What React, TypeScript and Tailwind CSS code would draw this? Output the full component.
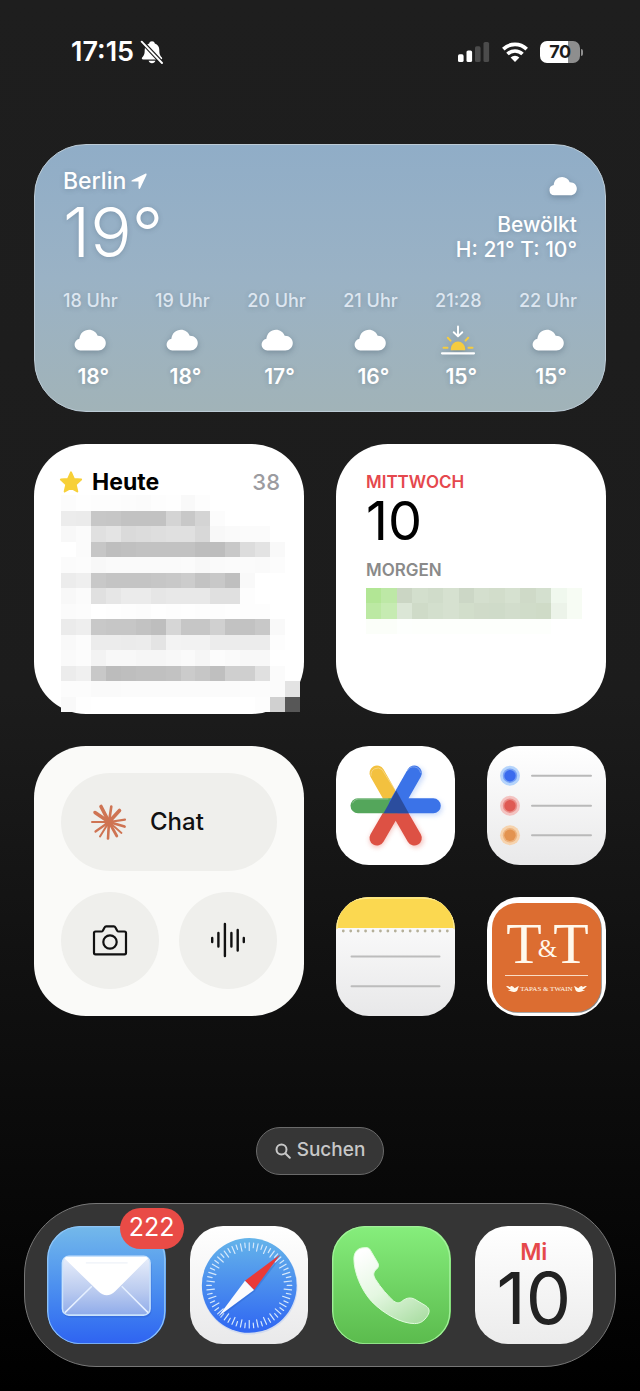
import type { ReactNode } from 'react';

const tile = 'relative block w-full aspect-square rounded-[33px] overflow-hidden';
const widget = 'rounded-[52px] aspect-square';

const hours = [
  { time: '18 Uhr', temp: '18°' },
  { time: '19 Uhr', temp: '18°' },
  { time: '20 Uhr', temp: '17°' },
  { time: '21 Uhr', temp: '16°' },
  { time: '21:28', temp: '15°', sunset: true },
  { time: '22 Uhr', temp: '15°' },
];

const taskRows = [
  'fc fe fd fd fc fb fd fe f9 fd -- -- -- -- -- --',
  'ec eb c7 c6 c2 c2 c2 d4 c8 d4 fc -- -- -- -- --',
  'f8 fb e0 e4 da dc de e0 e0 d8 f8 fa fb fb -- --',
  '-- fb c6 be c0 c2 c2 c2 c2 bd bd c8 dc e3 f9 --',
  'fb fc f8 fa fa fa fa fa fb f8 fa fb fb fa fc --',
  'ec ef c8 c4 c4 c4 c6 c8 cc c3 c8 bf f9 -- -- --',
  'f8 fb e0 e6 eb eb e6 e8 e8 e8 e0 e0 fd -- -- --',
  'fb fc -- fe fd fc fe fd fe fd fd fe fd fd -- --',
  'eb ee c8 c6 c6 c2 be d6 c6 c6 d0 c2 c2 c8 f9 --',
  'f9 fc ec ec eb ec e4 f3 f2 f2 ec ec ec ec fd --',
  'fa fc f3 f8 f8 f6 f6 f8 fa f6 fc fa f8 f8 -- --',
  'ec f0 c8 bc be c0 c0 c2 cb c6 bf cf cf e0 fb --',
  'fc fc fa fa fb fb fb fb fb fb fb fb fc fc fb e3',
  'f9 fe -- -- -- -- -- -- -- -- -- -- -- fd d0 57',
];

const eventRows = [
  '#b2e695 #bde8a6 #cbd6c4 #d3dfcd #d0dcca #d6e1d0 #ccd7c6 #d4dfce #d2ddcb #d6e1d0 #cfdac8 #d4e0cf #f0f8ee #f7fcf4',
  '#bce9a3 #c6ebb2 #dbe6d6 #cfdbc8 #d3dfcd #d6e1d0 #d2decb #d0dbc9 #cfdbc9 #d2ddcc #d0dcc9 #cfdbc7 #ecf3e9 #f7fcf4',
  '#fbfef9 #fbfef9 #fdfffd #fdfffc #fdfffc #fdfffc #fdfffc #fdfffc #fdfffc #fdfffc #fdfffc #fdfffc #fff #fff',
];

function Mosaic({ rows, cellWidth, cellHeight }: { rows: string[]; cellWidth: number; cellHeight: number }) {
  const cells = rows.map((row) => row.split(' '));
  return (
    <svg
      className="block w-full"
      viewBox={`0 0 ${cells[0].length * cellWidth} ${rows.length * cellHeight}`}
      shapeRendering="crispEdges"
      aria-hidden="true"
    >
      {cells.map((row, y) =>
        row.map((c, x) =>
          c === '--' ? null : (
            <rect
              key={`${x}-${y}`}
              x={x * cellWidth}
              y={y * cellHeight}
              width={cellWidth}
              height={cellHeight}
              fill={c.startsWith('#') ? c : `#${c}${c}${c}`}
            />
          )
        )
      )}
    </svg>
  );
}

function Cloud({ className }: { className: string }) {
  return (
    <svg viewBox="0 0 32 22" className={`${className} drop-shadow-[0_2px_3px_rgba(50,70,90,0.35)]`} fill="#fff" aria-hidden="true">
      <path d="M6.2 21.5A5.9 5.9 0 0 1 5.4 9.8C5.8 4.4 10 .7 15 .7c4 0 7.300 2.400 8.700 6 4.600-.2 8.100 3.100 8.100 7.300 0 4.300-3.300 7.500-7.500 7.500z" />
    </svg>
  );
}

function Sunset() {
  return (
    <svg viewBox="0 0 36 30" className="w-9 h-[30px] drop-shadow-[0_2px_3px_rgba(50,70,90,0.3)]" fill="none" strokeLinecap="round" aria-hidden="true">
      <path d="M18 1.500v9.500M13.700 7.200 18 11.400l4.300-4.200" stroke="#fff" strokeWidth="1.900" strokeLinejoin="round" />
      <path d="M10.800 25.300v-1.500a7.200 7.200 0 0 1 14.400 0v1.500z" fill="#f5cc3f" />
      <path d="M3.500 22.800h4M28.500 22.800h4M7.800 12.800l2.700 2.800M28.200 12.800l-2.700 2.800" stroke="#f5cc3f" strokeWidth="2" />
      <path d="M2 28.300h32" stroke="#fff" strokeWidth="2.200" />
    </svg>
  );
}

function StatusBar() {
  return (
    <header className="flex items-center justify-between pt-[38px] pl-[71px] pr-[57px] text-white">
      <div className="flex items-center gap-1.5">
        <span className="text-[27px] leading-7 font-semibold">17:15</span>
        <svg viewBox="0 0 24 24" className="w-6 h-6" aria-label="Stumm">
          <path d="M12 1.200c1.500 0 2.500.9 2.800 2.200 3 .9 4.500 3.300 4.500 6.600 0 4.300.7 5.600 2.400 7.300.9.9.5 2.100-.8 2.100H3.100c-1.300 0-1.700-1.200-.8-2.100C4 15.600 4.700 14.300 4.700 10c0-3.300 1.500-5.700 4.500-6.600.300-1.300 1.300-2.200 2.800-2.200zM8.600 20.700h6.800c-.4 1.500-1.700 2.500-3.400 2.500s-3-1-3.400-2.500z" fill="#fff" />
          <path d="M1.900 1.600 22.600 23.700" stroke="#1e1e1e" strokeWidth="4.200" />
          <path d="M1.700 1.700 22 23" stroke="#fff" strokeWidth="1.900" strokeLinecap="round" />
        </svg>
      </div>
      <div className="flex items-center">
        <svg viewBox="0 0 32 20" className="w-8 h-5 mr-3" aria-label="Mobilfunk">
          <rect x="0" y="12.300" width="5.600" height="7.700" rx="1.600" fill="#fff" />
          <rect x="8.500" y="8.500" width="5.600" height="11.500" rx="1.600" fill="#fff" />
          <rect x="17" y="4.300" width="5.600" height="15.700" rx="1.600" fill="#4b4b4b" />
          <rect x="25.500" y="0" width="5.600" height="20" rx="1.600" fill="#4b4b4b" />
        </svg>
        <svg viewBox="0 0 26 20" className="w-[26px] h-5 mr-3" aria-label="WLAN">
          <g fill="none" stroke="#fff" strokeWidth="3.600">
            <path d="M1.300 7.100a16.800 16.800 0 0 1 23.400 0" />
            <path d="M5.500 12a10.700 10.700 0 0 1 15 0" />
          </g>
          <path d="M13 19.900 8.600 15.500a6.300 6.300 0 0 1 8.800 0z" fill="#fff" />
        </svg>
        <div className="flex items-center gap-px">
          <div className="h-[22px] w-10 rounded-[7px] bg-linear-to-r from-white from-70% to-[#8e8e8e] to-70% flex items-center justify-center">
            <span className="text-[18px] leading-5 font-bold tracking-tight text-[#1c1c1c]">70</span>
          </div>
          <div className="w-0.5 h-[7px] rounded-r-full bg-[#8e8e8e]" />
        </div>
      </div>
    </header>
  );
}

function Weather() {
  return (
    <section className="rounded-[52px] px-7 pt-[22px] pb-5 bg-linear-to-b from-[#90adc7] via-[#9ab2c5] to-[#a1b3b8] border border-[#bccbd6] text-white text-shadow-[0_1px_5px_rgb(50_70_90/0.25)]">
      <div className="flex justify-between">
        <div>
          <h2 className="flex items-center gap-1 text-[23px] leading-7 font-medium">
            Berlin
            <svg viewBox="0 0 18 18" className="w-[18px] h-[18px]" fill="#fff" aria-hidden="true">
              <path d="M2 8.300 15.300 1.700c.9-.4 1.600.3 1.200 1.200L10.200 16.300c-.5 1-1.700.8-1.700-.4V9.600H2.400C1.200 9.600 1 8.800 2 8.300z" />
            </svg>
          </h2>
          <p className="text-[69px] leading-[74px] font-light">19°</p>
        </div>
        <div className="flex flex-col items-end pt-[9px] text-[21px] leading-[25px] font-medium">
          <Cloud className="w-7 h-5 mb-4" />
          <p>Bewölkt</p>
          <p>H: 21° T: 10°</p>
        </div>
      </div>
      <ul className="flex justify-between pt-5">
        {hours.map((h) => (
          <li key={h.time} className="flex flex-col items-center">
            <span className="text-[18px] leading-6 font-medium text-[#dde6f0]">{h.time}</span>
            <span className="flex h-[46px] items-center mt-1">{h.sunset ? <Sunset /> : <Cloud className="w-8 h-[22px]" />}</span>
            <span className="text-[21px] leading-7 font-semibold pl-1.5">{h.temp}</span>
          </li>
        ))}
      </ul>
    </section>
  );
}

function Tasks() {
  return (
    <section className={`${widget} bg-white pt-6 pl-[27px] pr-1 text-black`}>
      <div className="flex items-center pr-5 h-[27px]">
        <svg viewBox="0 0 24 24" className="w-6 h-6 -ml-0.5" fill="#f7d038" stroke="#f7d038" strokeWidth="2" strokeLinejoin="round" aria-hidden="true">
          <path d="m12 2.300 2.900 6.600 7.200.7-5.400 4.800 1.600 7.100L12 17.800l-6.300 3.700 1.600-7.100L1.900 9.600l7.200-.7z" />
        </svg>
        <h2 className="pl-[9px] grow text-[23px] leading-7 font-bold">Heute</h2>
        <span className="text-[22px] leading-7 font-medium text-[#9b9ba0]">38</span>
      </div>
      <Mosaic rows={taskRows} cellWidth={15} cellHeight={15.6} />
    </section>
  );
}

function DayWidget() {
  return (
    <section className={`${widget} bg-white pt-[26px] pl-[30px] pr-6 text-black`}>
      <h2 className="text-[17px] leading-6 font-semibold text-[#e5484d]">MITTWOCH</h2>
      <p className="text-[54px] leading-[54px]">10</p>
      <h3 className="mt-2.5 mb-1.5 text-[17px] leading-6 font-semibold text-[#8a8a8a]">MORGEN</h3>
      <Mosaic rows={eventRows} cellWidth={15} cellHeight={15} />
    </section>
  );
}

const rays = [
  [-8, -15.5, 3.6], [2.3, -15.5, 2.6], [10.5, -11.5, 3.6], [16, -2.3, 2.2], [15.5, 4.5, 2.8], [12.5, 11, 1.8],
  [7.8, 14, 2.8], [-1, 16.500, 2.6], [-9, 14.5, 2], [-13.5, 9.500, 2.2], [-17, 0, 2], [-14, -9.500, 3.4],
];

function ChatWidget() {
  const button = 'flex items-center justify-center rounded-full bg-[#efefec]';
  return (
    <section className={`${widget} bg-[#fafaf8] p-[27px] grid grid-cols-2 grid-rows-2 gap-x-5 gap-y-[21px] text-[#111]`}>
      <button className={`${button} col-span-2 justify-start! pl-[29px] gap-[22px]`}>
        <svg viewBox="-19 -19 38 38" className="w-[38px] h-[38px]" stroke="#cf7453" strokeLinecap="round" aria-hidden="true">
          <circle r="4.500" fill="#cf7453" stroke="none" />
          {rays.map(([x, y, w]) => (
            <path key={`${x},${y}`} d={`M0 0 ${x} ${y}`} strokeWidth={w} />
          ))}
        </svg>
        <span className="text-[24px] leading-7 font-medium">Chat</span>
      </button>
      <button className={button} aria-label="Kamera">
        <svg viewBox="0 0 36 32" className="w-9 h-8" fill="none" stroke="currentColor" strokeWidth="2.200" strokeLinejoin="round" aria-hidden="true">
          <path d="M3.500 7.500h5.800c.7 0 1.200-.3 1.500-.8l1.900-3.400c.3-.6.800-.9 1.500-.9h7.600c.7 0 1.200.3 1.500.9l1.900 3.400c.3.500.8.800 1.500.800h5.800c1 0 1.500.6 1.500 1.500v19.800c0 1-.5 1.500-1.500 1.500h-29c-1 0-1.500-.5-1.500-1.500V9c0-.9.5-1.500 1.500-1.500z" />
          <circle cx="18" cy="18" r="6.700" />
        </svg>
      </button>
      <button className={button} aria-label="Sprache">
        <svg viewBox="0 0 36 36" className="w-9 h-9" fill="none" stroke="currentColor" strokeWidth="2.400" strokeLinecap="round" aria-hidden="true">
          <path d="M2.200 16v4M8.400 11v13.500M14.900 2v32M21.400 11v13.500M27.700 8v20.500M33.800 16v4" />
        </svg>
      </button>
    </section>
  );
}

function GoogleOneIcon() {
  return (
    <svg viewBox="0 0 119 119" className={`${tile} bg-white`} strokeWidth="15" strokeLinecap="round" role="img" aria-label="Google One">
      <defs>
        <filter id="arm-glow" x="-20%" y="-20%" width="140%" height="140%">
          <feGaussianBlur stdDeviation="2.500" />
        </filter>
      </defs>
      <g filter="url(#arm-glow)" opacity="0.35">
        <path d="M80 94 61 63M41 94l18-30" stroke="#df4f43" />
        <path d="M99 62H62M81 29 61 60" stroke="#6f9df0" />
      </g>
      <path d="M41 27 59.700 59.700" stroke="#f3c13f" />
      <path d="M78.300 92 59.700 59.700M41 92l18.700-32.300" stroke="#dd5144" />
      <path d="M22 59.700h37" stroke="#54a65b" />
      <path d="M97.300 59.700H62M78.300 27 60.300 58.500" stroke="#3b73e8" />
      <path d="M60.200 44.500 72.800 67.200H47.500z" fill="#2b4d9e" />
      <g fill="none" stroke="#fff" strokeWidth="0.800" opacity="0.400">
        <path d="M35 29.500a6.800 6.800 0 0 1 11-6l13.500 21M16.500 57a6.800 6.800 0 0 1 5.500-4h30M71.500 24.500a7 7 0 0 1 13 2" />
      </g>
    </svg>
  );
}

function RemindersIcon() {
  const dots = [
    { y: 29.7, halo: '#b5d4fb', core: '#3a6bee' },
    { y: 59.7, halo: '#f3c3c1', core: '#df5a54' },
    { y: 89.3, halo: '#f6d3ae', core: '#e39350' },
  ];
  return (
    <svg viewBox="0 0 119 119" className={`${tile} bg-linear-to-b from-white to-[#e9e9ea]`} role="img" aria-label="Erinnerungen">
      {dots.map((d) => (
        <g key={d.y}>
          <circle cx="23" cy={d.y} r="10" fill={d.halo} />
          <circle cx="23" cy={d.y} r="7.200" fill={d.core} opacity="0.500" />
          <circle cx="23" cy={d.y} r="5.700" fill={d.core} />
          <path d={`M45 ${d.y}h59`} stroke="#b9b9b9" strokeWidth="2" strokeLinecap="round" />
        </g>
      ))}
    </svg>
  );
}

function NotesIcon() {
  return (
    <svg viewBox="0 0 119 119" className={`${tile} bg-linear-to-b from-white to-[#e8e8e9]`} role="img" aria-label="Notizen">
      <path d="M0 0h119v31H0z" fill="#fbd850" />
      <path d="M1 32C1 10 12 1 34 1h51c22 0 33 9 33 31" fill="none" stroke="#fdea8e" strokeWidth="1.500" />
      <path d="M7.300 34h106" stroke="#b5b09a" strokeWidth="2.800" strokeDasharray="0 7.430" strokeLinecap="round" />
      <path d="M15.500 59.500h88M15.500 89.300h88" stroke="#bcbcbc" strokeWidth="2" strokeLinecap="round" />
    </svg>
  );
}

function TapasIcon() {
  const flourish = 'M0 1c2 0 3 .4 4.500 1.300C4 1 5.500.4 7 1.500c.8.6 1.200 1.300 1.700 1.800C10 3 10.500 1.500 13.300 1.300c-1 .9-1.300 2-1.600 3.300-.4 1.600-2.200 2.600-4 2.300C5.500 6.600 4.500 5.600 2 6c1-.9 1.800-.9 2.600-1.200C3 4 1.500 2.500 0 1z';
  return (
    <svg viewBox="0 0 119 119" className={`${tile} bg-white`} fill="#fff8ec" role="img" aria-label="Tapas &amp; Twain">
      <rect x="5.800" y="6.800" width="109" height="109" rx="25" fill="#8a8a8a" />
      <rect x="5" y="6" width="109" height="109" rx="25" fill="#dc6d31" />
      <g className="font-['Liberation_Serif',serif]" textAnchor="middle">
        <text x="37" y="66" fontSize="58">T</text>
        <text x="60.500" y="60" fontSize="25">&amp;</text>
        <text x="84" y="66" fontSize="58">T</text>
        <text x="59.500" y="94" fontSize="7">TAPAS &amp; TWAIN</text>
      </g>
      <path d="M18 78.500h83" stroke="#f9dcc5" strokeWidth="1.200" />
      <path d={flourish} transform="translate(19 88)" />
      <path d={flourish} transform="translate(100 88) scale(-1 1)" />
    </svg>
  );
}

function MailIcon() {
  return (
    <svg viewBox="0 0 119 119" className={`${tile} bg-linear-to-b from-[#74b9ea] to-[#2f63f1]`} role="img" aria-label="Mail">
      <defs>
        <linearGradient id="envelope" x1="0" y1="0" x2="0" y2="1">
          <stop offset="0" stopColor="#e9effb" />
          <stop offset="0.600" stopColor="#b9caef" />
          <stop offset="1" stopColor="#8fabea" />
        </linearGradient>
      </defs>
      <rect x="0.700" y="0.700" width="117.600" height="117.600" rx="32.500" fill="none" stroke="#8fc4f5" strokeWidth="1.300" />
      <rect x="16" y="32" width="89" height="60" rx="7" fill="#2c57c4" opacity="0.350" />
      <rect x="15.500" y="30.500" width="88" height="59" rx="6.500" fill="url(#envelope)" stroke="#c9e2fc" strokeWidth="1.600" />
      <path d="M18 87 45 60.500M101.500 87 75 60.500" stroke="#e6f0ff" strokeWidth="1.500" />
      <path d="M17.500 32.500c.6-.8 2-1.300 3.500-1.300h77c1.500 0 2.900.5 3.500 1.300L68.500 65.500c-5.500 5.500-11.500 5.500-17 0z" fill="#fff" />
      <path d="M39 37h42" stroke="#eef2f8" strokeWidth="1.200" />
    </svg>
  );
}

function SafariIcon() {
  const ticks = Array.from({ length: 60 }, (_, i) => i);
  return (
    <svg viewBox="0 0 119 119" className={`${tile} bg-linear-to-b from-white to-[#e9e9ea]`} role="img" aria-label="Safari">
      <defs>
        <linearGradient id="dial" x1="0" y1="0" x2="0" y2="1">
          <stop offset="0" stopColor="#65b4ea" />
          <stop offset="1" stopColor="#2f66f2" />
        </linearGradient>
      </defs>
      <circle cx="60" cy="61" r="48" fill="#a9c4f5" opacity="0.400" />
      <circle cx="59.500" cy="59.700" r="47.600" fill="url(#dial)" />
      {ticks.map((i) => (
        <path
          key={i}
          d={i % 2 ? 'M59.500 17v4.600' : 'M59.500 17v7.500'}
          transform={`rotate(${i * 6} 59.500 59.700)`}
          stroke="#d5e8fb"
          strokeWidth="1.200"
          strokeLinecap="round"
        />
      ))}
      <path d="M91 32 65 65.500 29 93z" fill="#1c4bb5" opacity="0.250" />
      <path d="M90.600 28.500 55.200 55l9.100 9.200z" fill="#ea3a38" />
      <path d="M28.600 90.600 55.200 55l9.100 9.200z" fill="#fbfbfd" />
    </svg>
  );
}

function PhoneIcon() {
  return (
    <svg viewBox="0 0 119 119" className={`${tile} bg-linear-to-b from-[#86ee7c] to-[#5bbb4d]`} role="img" aria-label="Telefon">
      <defs>
        <linearGradient id="handset" x1="0.200" y1="0" x2="0.800" y2="1">
          <stop offset="0" stopColor="#ffffff" />
          <stop offset="0.500" stopColor="#e4f7e1" />
          <stop offset="1" stopColor="#aedfa7" />
        </linearGradient>
      </defs>
      <rect x="0.700" y="0.700" width="117.600" height="117.600" rx="32.500" fill="none" stroke="#a2f09a" strokeWidth="1.300" />
      <path
        d="M22 33C22 27 25 23 30 22L34 21.700C37 21.700 38 23 39 25L46 37C47.500 40 46.500 42 44 44C41 47 41.500 50 44 54C49 62 56 70 62 75.500C66 78 68 77.500 71 75C75 72 79 71.500 83 73.500L94 80C98 82.500 98.500 86 96 90C93 95 89 98 83 98C70 98 53 89 40 76C29 64 22 46 22 33Z"
        fill="url(#handset)"
        stroke="#e2fbdf"
        strokeWidth="1"
      />
    </svg>
  );
}

function AppLink({ name, children }: { name: string; children: ReactNode }) {
  return (
    <a href="#" aria-label={name} className="relative block">
      {children}
    </a>
  );
}

function Dock() {
  return (
    <nav className="mx-6 mb-6 px-[22px] py-[22px] rounded-[72px] bg-[#353535] border border-[#777] grid grid-cols-4 gap-6">
      <AppLink name="Mail">
        <MailIcon />
        <span className="absolute -top-[18px] -right-[18px] h-[41px] px-[9px] flex items-center rounded-full bg-[#e94b46] text-white text-[25px]">222</span>
      </AppLink>
      <AppLink name="Safari">
        <SafariIcon />
      </AppLink>
      <AppLink name="Telefon">
        <PhoneIcon />
      </AppLink>
      <AppLink name="Kalender">
        <div className={`${tile} bg-linear-to-b from-white to-[#ececec] pt-3 flex flex-col items-center`}>
          <span className="text-[23px] leading-7 font-semibold text-[#e5484b]">Mi</span>
          <span className="text-[72px] leading-[64px] font-normal text-[#222]">10</span>
        </div>
      </AppLink>
    </nav>
  );
}

export default function App() {
  return (
    <div className="min-h-screen flex flex-col bg-linear-to-b/srgb from-[#1e1e1e] via-[#1c1c1c] via-50% to-black font-[Inter,'Liberation_Sans',sans-serif]">
      <StatusBar />
      <main className="px-[34px] pt-[78px] grow flex flex-col gap-8">
        <Weather />
        <div className="grid grid-cols-2 gap-8">
          <Tasks />
          <DayWidget />
          <ChatWidget />
          <div className="grid grid-cols-2 gap-8 content-between">
            <AppLink name="Google One">
              <GoogleOneIcon />
            </AppLink>
            <AppLink name="Erinnerungen">
              <RemindersIcon />
            </AppLink>
            <AppLink name="Notizen">
              <NotesIcon />
            </AppLink>
            <AppLink name="Tapas & Twain">
              <TapasIcon />
            </AppLink>
          </div>
        </div>
      </main>
      <div className="flex justify-center pt-8 pb-7">
        <button className="flex items-center gap-1.5 h-12 px-[18px] rounded-full bg-[#363636] border border-[#6a6a6a] text-[#c8c8c8] text-[19px] font-medium">
          <svg viewBox="0 0 16 16" className="w-4 h-4" fill="none" stroke="currentColor" strokeWidth="2" strokeLinecap="round" aria-hidden="true">
            <circle cx="6.500" cy="6.500" r="5" />
            <path d="m10.500 10.500 4.300 4.300" />
          </svg>
          Suchen
        </button>
      </div>
      <Dock />
    </div>
  );
}
